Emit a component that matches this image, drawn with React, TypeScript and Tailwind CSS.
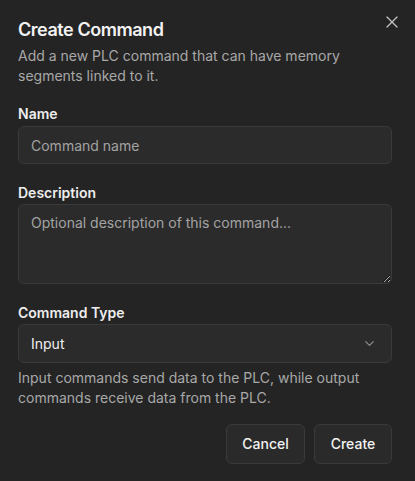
import { X, ChevronDown } from "lucide-react"

export default function App() {
  return (
    <div
      className="relative min-h-[481px] w-full bg-[#242424] pl-[18px] pr-[23px] pt-4 text-[#f2f2f2]"
      style={{ fontFamily: "Inter, 'Noto Sans', sans-serif" }}
    >
      {/* close button */}
      <button className="absolute right-[13px] top-[12px] text-[#c4c4c4]">
        <X size={20} strokeWidth={1.5} />
      </button>

      <h2 className="text-[18px] font-semibold leading-7 tracking-[-0.025em]">Create Command</h2>
      <p className="mt-0.5 text-sm leading-5 text-[#a8a8a8]">
        Add a new PLC command that can have memory segments linked to it.
      </p>

      <div className="mt-[18px] flex flex-col gap-[2px]">
        <label className="text-sm font-semibold leading-5 text-[#ededed]">Name</label>
        <input
          placeholder="Command name"
          className="h-[38px] w-full rounded-md border border-[#3a3a3a] bg-[#2b2b2b] px-3 text-sm text-[#eee] outline-none placeholder:text-[#a3a3a3]"
        />
      </div>

      <div className="mt-[19px] flex flex-col gap-[1px]">
        <label className="text-sm font-semibold leading-5 text-[#ededed]">Description</label>
        <textarea
          placeholder="Optional description of this command..."
          className="h-[80px] w-full resize-y rounded-md border border-[#3a3a3a] bg-[#2b2b2b] px-3 py-[8px] text-sm leading-5 text-[#eee] outline-none placeholder:text-[#a3a3a3]"
        />
      </div>

      <div className="mt-[19px] flex flex-col gap-[1px]">
        <label className="text-sm font-semibold leading-5 text-[#ededed]">Command Type</label>
        <button className="flex h-[39px] w-full items-center justify-between rounded-md border border-[#3a3a3a] bg-[#2b2b2b] px-3 text-sm text-[#f0f0f0]">
          <span>Input</span>
          <ChevronDown size={15} className="mr-[2px] text-[#8c8c8c]" />
        </button>
      </div>

      <p className="mt-[5px] text-sm leading-5 text-[#a8a8a8]">
        Input commands send data to the PLC, while output commands receive data from the PLC.
      </p>

      <div className="mt-4 flex justify-end gap-[9px]">
        <button className="h-10 w-[79px] rounded-md border border-[#3a3a3a] bg-[#2a2a2a] text-sm font-medium text-[#f2f2f2]">
          Cancel
        </button>
        <button className="h-10 w-[78px] rounded-md border border-[#3a3a3a] bg-[#2a2a2a] text-sm font-medium text-[#f2f2f2]">
          Create
        </button>
      </div>
    </div>
  )
}
